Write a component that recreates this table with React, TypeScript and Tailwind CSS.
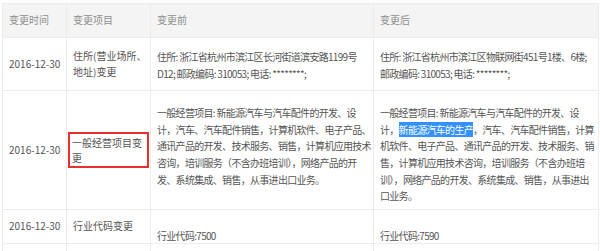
import React from "react";

type Row = {
  date: string;
  item: React.ReactNode;
  before: React.ReactNode;
  after: React.ReactNode;
  cellPad: string;
};

const rows: Row[] = [
  {
    date: "2016-12-30",
    item: (
      <>
        住所(营业场所、
        <br />
        地址)变更
      </>
    ),
    before: (
      <>
        住所: 浙江省杭州市滨江区长河街道滨安路1199号
        <br />
        D12; 邮政编码: 310053; 电话: ********;
      </>
    ),
    after: (
      <>
        住所: 浙江省杭州市滨江区物联网街451号1楼、6楼;
        <br />
        邮政编码: 310053; 电话: ********;
      </>
    ),
    cellPad: "pt-[11px] pb-[8px] align-middle",
  },
  {
    date: "2016-12-30",
    item: (
      <div className="border-2 border-[#e8302e] px-[2px] py-[1px] leading-[15px]">
        一般经营项目变
        <br />
        更
      </div>
    ),
    before: (
      <>
        一般经营项目: 新能源汽车与汽车配件的开发、设
        <br />
        计，汽车、汽车配件销售，计算机软件、电子产品、
        <br />
        通讯产品的开发、技术服务、销售，计算机应用技术
        <br />
        咨询，培训服务（不含办班培训），网络产品的开
        <br />
        发、系统集成、销售，从事进出口业务。
      </>
    ),
    after: (
      <>
        一般经营项目: 新能源汽车与汽车配件的开发、设
        <br />
        计，<span className="bg-[#3390ff] text-white">新能源汽车的生产</span>，汽车、汽车配件销售，计算
        <br />
        机软件、电子产品、通讯产品的开发、技术服务、销
        <br />
        售，计算机应用技术咨询，培训服务（不含办班培
        <br />
        训），网络产品的开发、系统集成、销售，从事进出
        <br />
        口业务。
      </>
    ),
    cellPad: "pt-[14px] pb-[4px] align-top",
  },
  {
    date: "2016-12-30",
    item: "行业代码变更",
    before: "行业代码:7500",
    after: "行业代码:7590",
    cellPad: "pt-[19px] pb-0 align-top leading-[14px]",
  },
];

export default function App() {
  return (
    <div
      className="w-[600px] h-[251px] overflow-hidden bg-white pl-[2px] pt-[3px] text-[10px] text-[#555]"
      style={{ fontFamily: '"Noto Sans CJK SC", "Noto Sans", sans-serif' }}
    >
      <table className="w-[596px] table-fixed border-collapse leading-[16.6px]">
        <colgroup>
          <col className="w-[64px]" />
          <col className="w-[84px]" />
          <col className="w-[223px]" />
          <col className="w-[225px]" />
        </colgroup>
        <thead>
          <tr className="h-[34px] bg-[#f4f4f4] text-[#8f8f8f]">
            <th className="border border-[#ececec] px-[6px] text-left font-normal">变更时间</th>
            <th className="border border-[#ececec] px-[6px] text-left font-normal">变更项目</th>
            <th className="border border-[#ececec] px-[6px] text-left font-normal">变更前</th>
            <th className="border border-[#ececec] px-[6px] text-left font-normal">变更后</th>
          </tr>
        </thead>
        <tbody>
          {rows.map((r, i) => (
            <tr key={i}>
              <td className="border border-[#ececec] px-[6px] align-middle whitespace-nowrap">{r.date}</td>
              <td
                className={`border border-[#ececec] align-middle whitespace-nowrap leading-[16px] ${
                  i === 1 ? "px-[1px]" : "px-[6px]"
                }`}
              >
                {r.item}
              </td>
              <td className={`border border-[#ececec] px-[6px] whitespace-nowrap tracking-[-0.7px] ${r.cellPad}`}>
                {r.before}
              </td>
              <td className={`border border-[#ececec] px-[6px] whitespace-nowrap tracking-[-0.7px] ${r.cellPad}`}>
                {r.after}
              </td>
            </tr>
          ))}
          <tr className="h-[20px]">
            <td className="border border-[#ececec]" />
            <td className="border border-[#ececec]" />
            <td className="border border-[#ececec]" />
            <td className="border border-[#ececec]" />
          </tr>
        </tbody>
      </table>
    </div>
  );
}
